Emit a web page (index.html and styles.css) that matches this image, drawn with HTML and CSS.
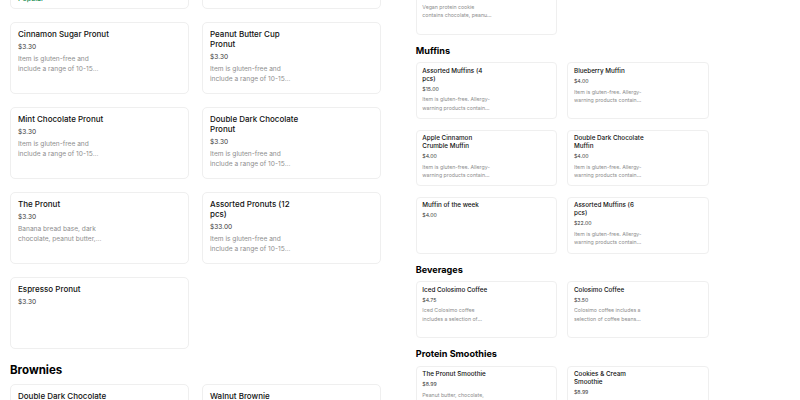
FILE: index.html
```html
<!DOCTYPE html>
<html>
<head>
<meta charset="utf-8">
<link rel="stylesheet" href="styles.css">
</head>
<body>
<div class="page">
  <div class="panel">
    <div class="menu menu-left">
      <div class="grid grid-first">
        <div class="card">
          <div class="info">
            <div class="title">Original Pronut</div>
            <div class="price">$3.30</div>
            <div class="desc">Item is gluten-free and include a range of 10-15 flavors each week</div>
            <div class="popular">Popular</div>
          </div>
        </div>
        <div class="card">
          <div class="info">
            <div class="title">Vanilla Bean Pronut</div>
            <div class="price">$3.30</div>
            <div class="desc">Item is gluten-free and include a range of 10-15 flavors each week</div>
          </div>
        </div>
      </div>
      <div class="grid">
        <div class="card">
          <div class="info">
            <div class="title">Cinnamon Sugar Pronut</div>
            <div class="price">$3.30</div>
            <div class="desc">Item is gluten-free and include a range of 10-15 flavors each week</div>
          </div>
        </div>
        <div class="card">
          <div class="info">
            <div class="title">Peanut Butter Cup Pronut</div>
            <div class="price">$3.30</div>
            <div class="desc">Item is gluten-free and include a range of 10-15 flavors each week</div>
          </div>
        </div>
        <div class="card">
          <div class="info">
            <div class="title">Mint Chocolate Pronut</div>
            <div class="price">$3.30</div>
            <div class="desc">Item is gluten-free and include a range of 10-15 flavors each week</div>
          </div>
        </div>
        <div class="card">
          <div class="info">
            <div class="title">Double Dark Chocolate Pronut</div>
            <div class="price">$3.30</div>
            <div class="desc">Item is gluten-free and include a range of 10-15 flavors each week</div>
          </div>
        </div>
        <div class="card">
          <div class="info">
            <div class="title">The Pronut</div>
            <div class="price">$3.30</div>
            <div class="desc">Banana bread base, dark chocolate, peanut butter, and sea salt</div>
          </div>
        </div>
        <div class="card">
          <div class="info">
            <div class="title">Assorted Pronuts (12 pcs)</div>
            <div class="price">$33.00</div>
            <div class="desc">Item is gluten-free and include a range of 10-15 flavors each week</div>
          </div>
        </div>
        <div class="card">
          <div class="info">
            <div class="title">Espresso Pronut</div>
            <div class="price">$3.30</div>
          </div>
        </div>
      </div>
      <h2 class="section-title">Brownies</h2>
      <div class="grid">
        <div class="card">
          <div class="info">
            <div class="title">Double Dark Chocolate Brownie</div>
            <div class="price">$4.00</div>
          </div>
        </div>
        <div class="card">
          <div class="info">
            <div class="title">Walnut Brownie</div>
            <div class="price">$4.00</div>
          </div>
        </div>
      </div>
    </div>
  </div>
  <div class="panel">
    <div class="menu menu-right">
      <div class="grid grid-first-right">
        <div class="card">
          <div class="info">
            <div class="title">Vegan Protein Cookie</div>
            <div class="price">$4.50</div>
            <div class="desc">Vegan protein cookie contains chocolate, peanut butter and oats</div>
          </div>
        </div>
      </div>
      <h2 class="section-title">Muffins</h2>
      <div class="grid">
        <div class="card">
          <div class="info">
            <div class="title">Assorted Muffins (4 pcs)</div>
            <div class="price">$15.00</div>
            <div class="desc">Item is gluten-free. Allergy-warning products contain nuts and dairy</div>
          </div>
        </div>
        <div class="card">
          <div class="info">
            <div class="title">Blueberry Muffin</div>
            <div class="price">$4.00</div>
            <div class="desc">Item is gluten-free. Allergy-warning products contain nuts and dairy</div>
          </div>
        </div>
        <div class="card">
          <div class="info">
            <div class="title">Apple Cinnamon Crumble Muffin</div>
            <div class="price">$4.00</div>
            <div class="desc">Item is gluten-free. Allergy-warning products contain nuts and dairy</div>
          </div>
        </div>
        <div class="card">
          <div class="info">
            <div class="title">Double Dark Chocolate Muffin</div>
            <div class="price">$4.00</div>
            <div class="desc">Item is gluten-free. Allergy-warning products contain nuts and dairy</div>
          </div>
        </div>
        <div class="card">
          <div class="info">
            <div class="title">Muffin of the week</div>
            <div class="price">$4.00</div>
          </div>
        </div>
        <div class="card">
          <div class="info">
            <div class="title">Assorted Muffins (6 pcs)</div>
            <div class="price">$22.00</div>
            <div class="desc">Item is gluten-free. Allergy-warning products contain nuts and dairy</div>
          </div>
        </div>
      </div>
      <h2 class="section-title">Beverages</h2>
      <div class="grid">
        <div class="card">
          <div class="info">
            <div class="title">Iced Colosimo Coffee</div>
            <div class="price">$4.75</div>
            <div class="desc">Iced Colosimo coffee includes a selection of coffee beans</div>
          </div>
        </div>
        <div class="card">
          <div class="info">
            <div class="title">Colosimo Coffee</div>
            <div class="price">$3.50</div>
            <div class="desc">Colosimo coffee includes a selection of coffee beans from around the world</div>
          </div>
        </div>
      </div>
      <h2 class="section-title">Protein Smoothies</h2>
      <div class="grid">
        <div class="card">
          <div class="info">
            <div class="title">The Pronut Smoothie</div>
            <div class="price">$8.99</div>
            <div class="desc">Peanut butter, chocolate, banana and protein</div>
          </div>
        </div>
        <div class="card">
          <div class="info">
            <div class="title">Cookies &amp; Cream Smoothie</div>
            <div class="price">$8.99</div>
            <div class="desc">Cookies and cream protein smoothie</div>
          </div>
        </div>
      </div>
    </div>
  </div>
</div>
</body>
</html>
```

FILE: styles.css
```css
* { box-sizing: border-box; }

html, body {
  margin: 0;
  padding: 0;
  background: #ffffff;
}

body {
  font-family: Inter, "Noto Sans", sans-serif;
  color: #141414;
}

.page {
  display: flex;
  width: 800px;
  height: 400px;
  overflow: hidden;
}

.panel {
  width: 400px;
  height: 400px;
  overflow: hidden;
  flex: none;
}

.menu {
  display: flex;
  flex-direction: column;
}

.menu-left {
  padding-left: 10px;
}

.menu-right {
  zoom: 0.79;
  width: 506px;
  padding-left: 20px;
}

.grid {
  display: grid;
  grid-template-columns: 179px 179px;
  column-gap: 13px;
  row-gap: 13px;
}

.grid-first {
  margin-top: -63px;
  margin-bottom: 13px;
}

.grid-first-right {
  margin-top: -28px;
}

.card {
  height: 72px;
  border: 1px solid #efefef;
  border-radius: 5px;
  padding: 6px 7px;
  background: #fff;
}

.info {
  width: 94px;
}

.title {
  font-size: 8px;
  line-height: 10px;
  font-weight: 500;
  color: #111111;
}

.price {
  margin-top: 2.5px;
  font-size: 6.6px;
  line-height: 10px;
  color: #3a3a3a;
}

.desc {
  width: 88px;
  margin-top: 2px;
  font-size: 6.6px;
  line-height: 10.4px;
  color: #8e8e8e;
  display: -webkit-box;
  -webkit-line-clamp: 2;
  -webkit-box-orient: vertical;
  overflow: hidden;
}

.popular {
  margin-top: 5px;
  font-size: 7px;
  line-height: 10px;
  font-weight: 500;
  color: #0e8a4a;
}

.section-title {
  margin: 13px 0 6px 0;
  font-size: 11.5px;
  line-height: 16px;
  font-weight: 700;
  color: #000;
}
```
